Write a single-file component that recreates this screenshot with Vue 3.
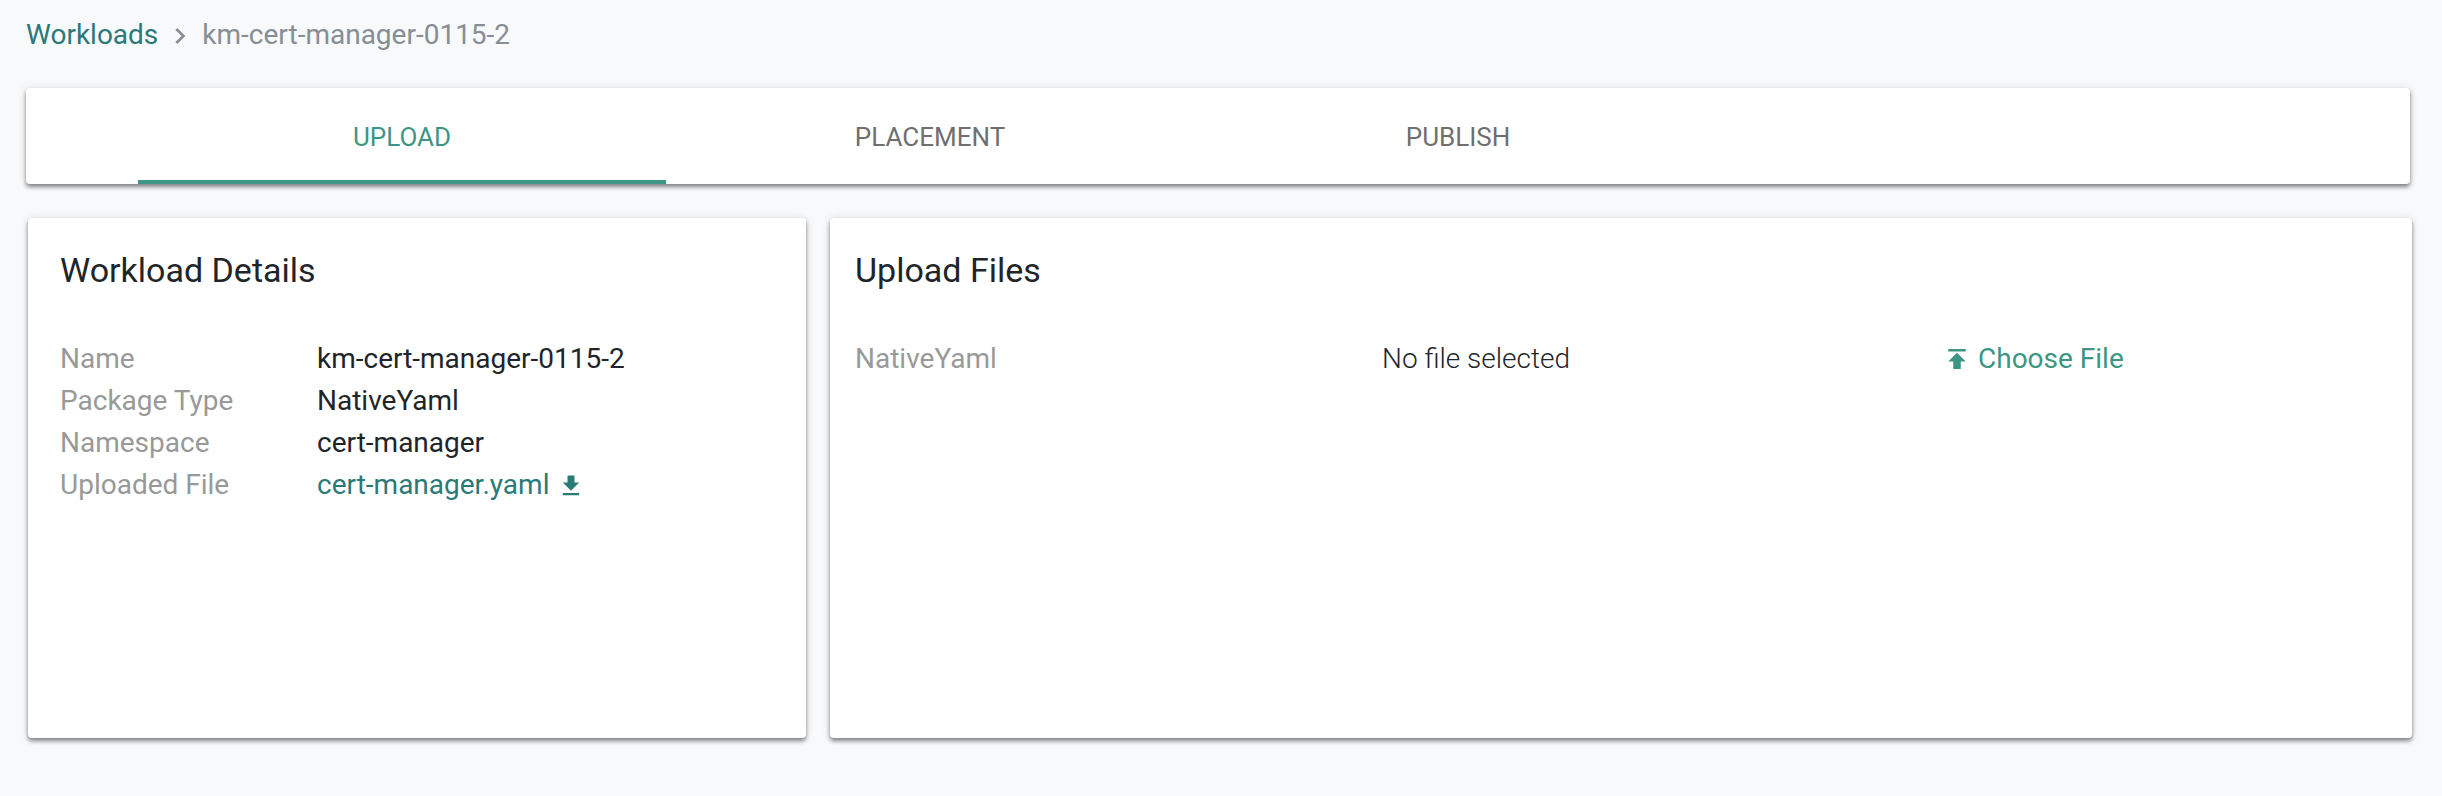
<script setup>
const rows = [
  { label: 'Name', value: 'km-cert-manager-0115-2' },
  { label: 'Package Type', value: 'NativeYaml' },
  { label: 'Namespace', value: 'cert-manager' },
];
const tabs = ['UPLOAD', 'PLACEMENT', 'PUBLISH'];
</script>

<template>
  <div class="page">
    <nav class="crumbs">
      <a class="crumb-link">Workloads</a>
      <svg class="chev" viewBox="0 0 24 24"><path d="M8.59 16.59 13.17 12 8.59 7.41 10 6l6 6-6 6z" /></svg>
      <span class="crumb-current">km-cert-manager-0115-2</span>
    </nav>

    <div class="tabs">
      <div v-for="(t, i) in tabs" :key="t" class="tab" :class="{ active: i === 0 }">{{ t }}</div>
    </div>

    <div class="cards">
      <section class="card details">
        <h2>Workload Details</h2>
        <div class="info">
          <div v-for="r in rows" :key="r.label" class="row">
            <span class="label">{{ r.label }}</span>
            <span class="value">{{ r.value }}</span>
          </div>
          <div class="row">
            <span class="label">Uploaded File</span>
            <a class="file">cert-manager.yaml
              <svg class="dl" viewBox="0 0 24 24"><path d="M19 9h-4V3H9v6H5l7 7 7-7zM5 18v2h14v-2H5z" /></svg>
            </a>
          </div>
        </div>
      </section>

      <section class="card upload">
        <h2>Upload Files</h2>
        <div class="upload-row">
          <span class="label">NativeYaml</span>
          <span class="value light">No file selected</span>
          <a class="choose">
            <svg class="ul" viewBox="0 0 24 24"><path d="M5 4v2h14V4H5zm0 10h4v6h6v-6h4l-7-7-7 7z" /></svg>
            Choose File
          </a>
        </div>
      </section>
    </div>
  </div>
</template>

<style>
html, body { margin: 0; background: #f8f9fb; }
</style>

<style scoped>
.page {
  box-sizing: border-box;
  width: 2442px;
  height: 796px;
  padding: 16px 30px 0 26px;
  font-family: Roboto, "Liberation Sans", sans-serif;
  font-size: 28px;
  color: #212529;
  background: #f8f9fb;
}
.crumbs {
  display: flex;
  align-items: center;
  height: 36px;
  margin-bottom: 36px;
}
.crumb-link { color: #2b7a78; }
.chev { width: 32px; height: 32px; margin: 3px 6px 0 6px; fill: #868e96; }
.crumb-current { color: #868e96; }
.tabs {
  display: flex;
  width: 2384px;
  height: 96px;
  padding-left: 112px;
  box-sizing: border-box;
  background: #fff;
  border-radius: 4px;
  box-shadow: 0 3px 4px rgba(0, 0, 0, .45), 0 0 10px rgba(0, 0, 0, .1);
}
.tab {
  width: 528px;
  box-sizing: border-box;
  display: flex;
  align-items: center;
  justify-content: center;
  padding-top: 2px;
  font-size: 26px;
  color: #6f6f6f;
}
.tab.active {
  color: #3d9684;
  border-bottom: 4px solid #3d9684;
  padding-top: 6px;
}
.cards {
  display: flex;
  gap: 24px;
  margin: 34px 0 0 2px;
  width: 2384px;
}
.card {
  box-sizing: border-box;
  height: 520px;
  padding: 32px 32px;
  background: #fff;
  border-radius: 4px;
  box-shadow: 0 3px 4px rgba(0, 0, 0, .45), 0 0 10px rgba(0, 0, 0, .1);
}
.details { width: 778px; flex: none; }
.upload { flex: 1; padding-left: 25px; }
h2 {
  margin: 0 0 48px;
  font-size: 34px;
  font-weight: 400;
  line-height: 40px;
  color: #212529;
}
.row { display: flex; height: 42px; line-height: 42px; }
.label { width: 257px; flex: none; color: #999; }
.file { color: #2b7a78; }
.dl { width: 28px; height: 28px; vertical-align: -6px; margin-left: 1px; fill: #2b7a78; }
.upload-row { display: flex; height: 42px; line-height: 42px; }
.upload-row .label { width: 527px; }
.upload-row .value { width: 560px; }
.light { font-weight: 300; }
.choose { color: #3d9684; display: flex; align-items: center; }
.ul { width: 30px; height: 30px; margin-right: 6px; fill: #3d9684; }
</style>
